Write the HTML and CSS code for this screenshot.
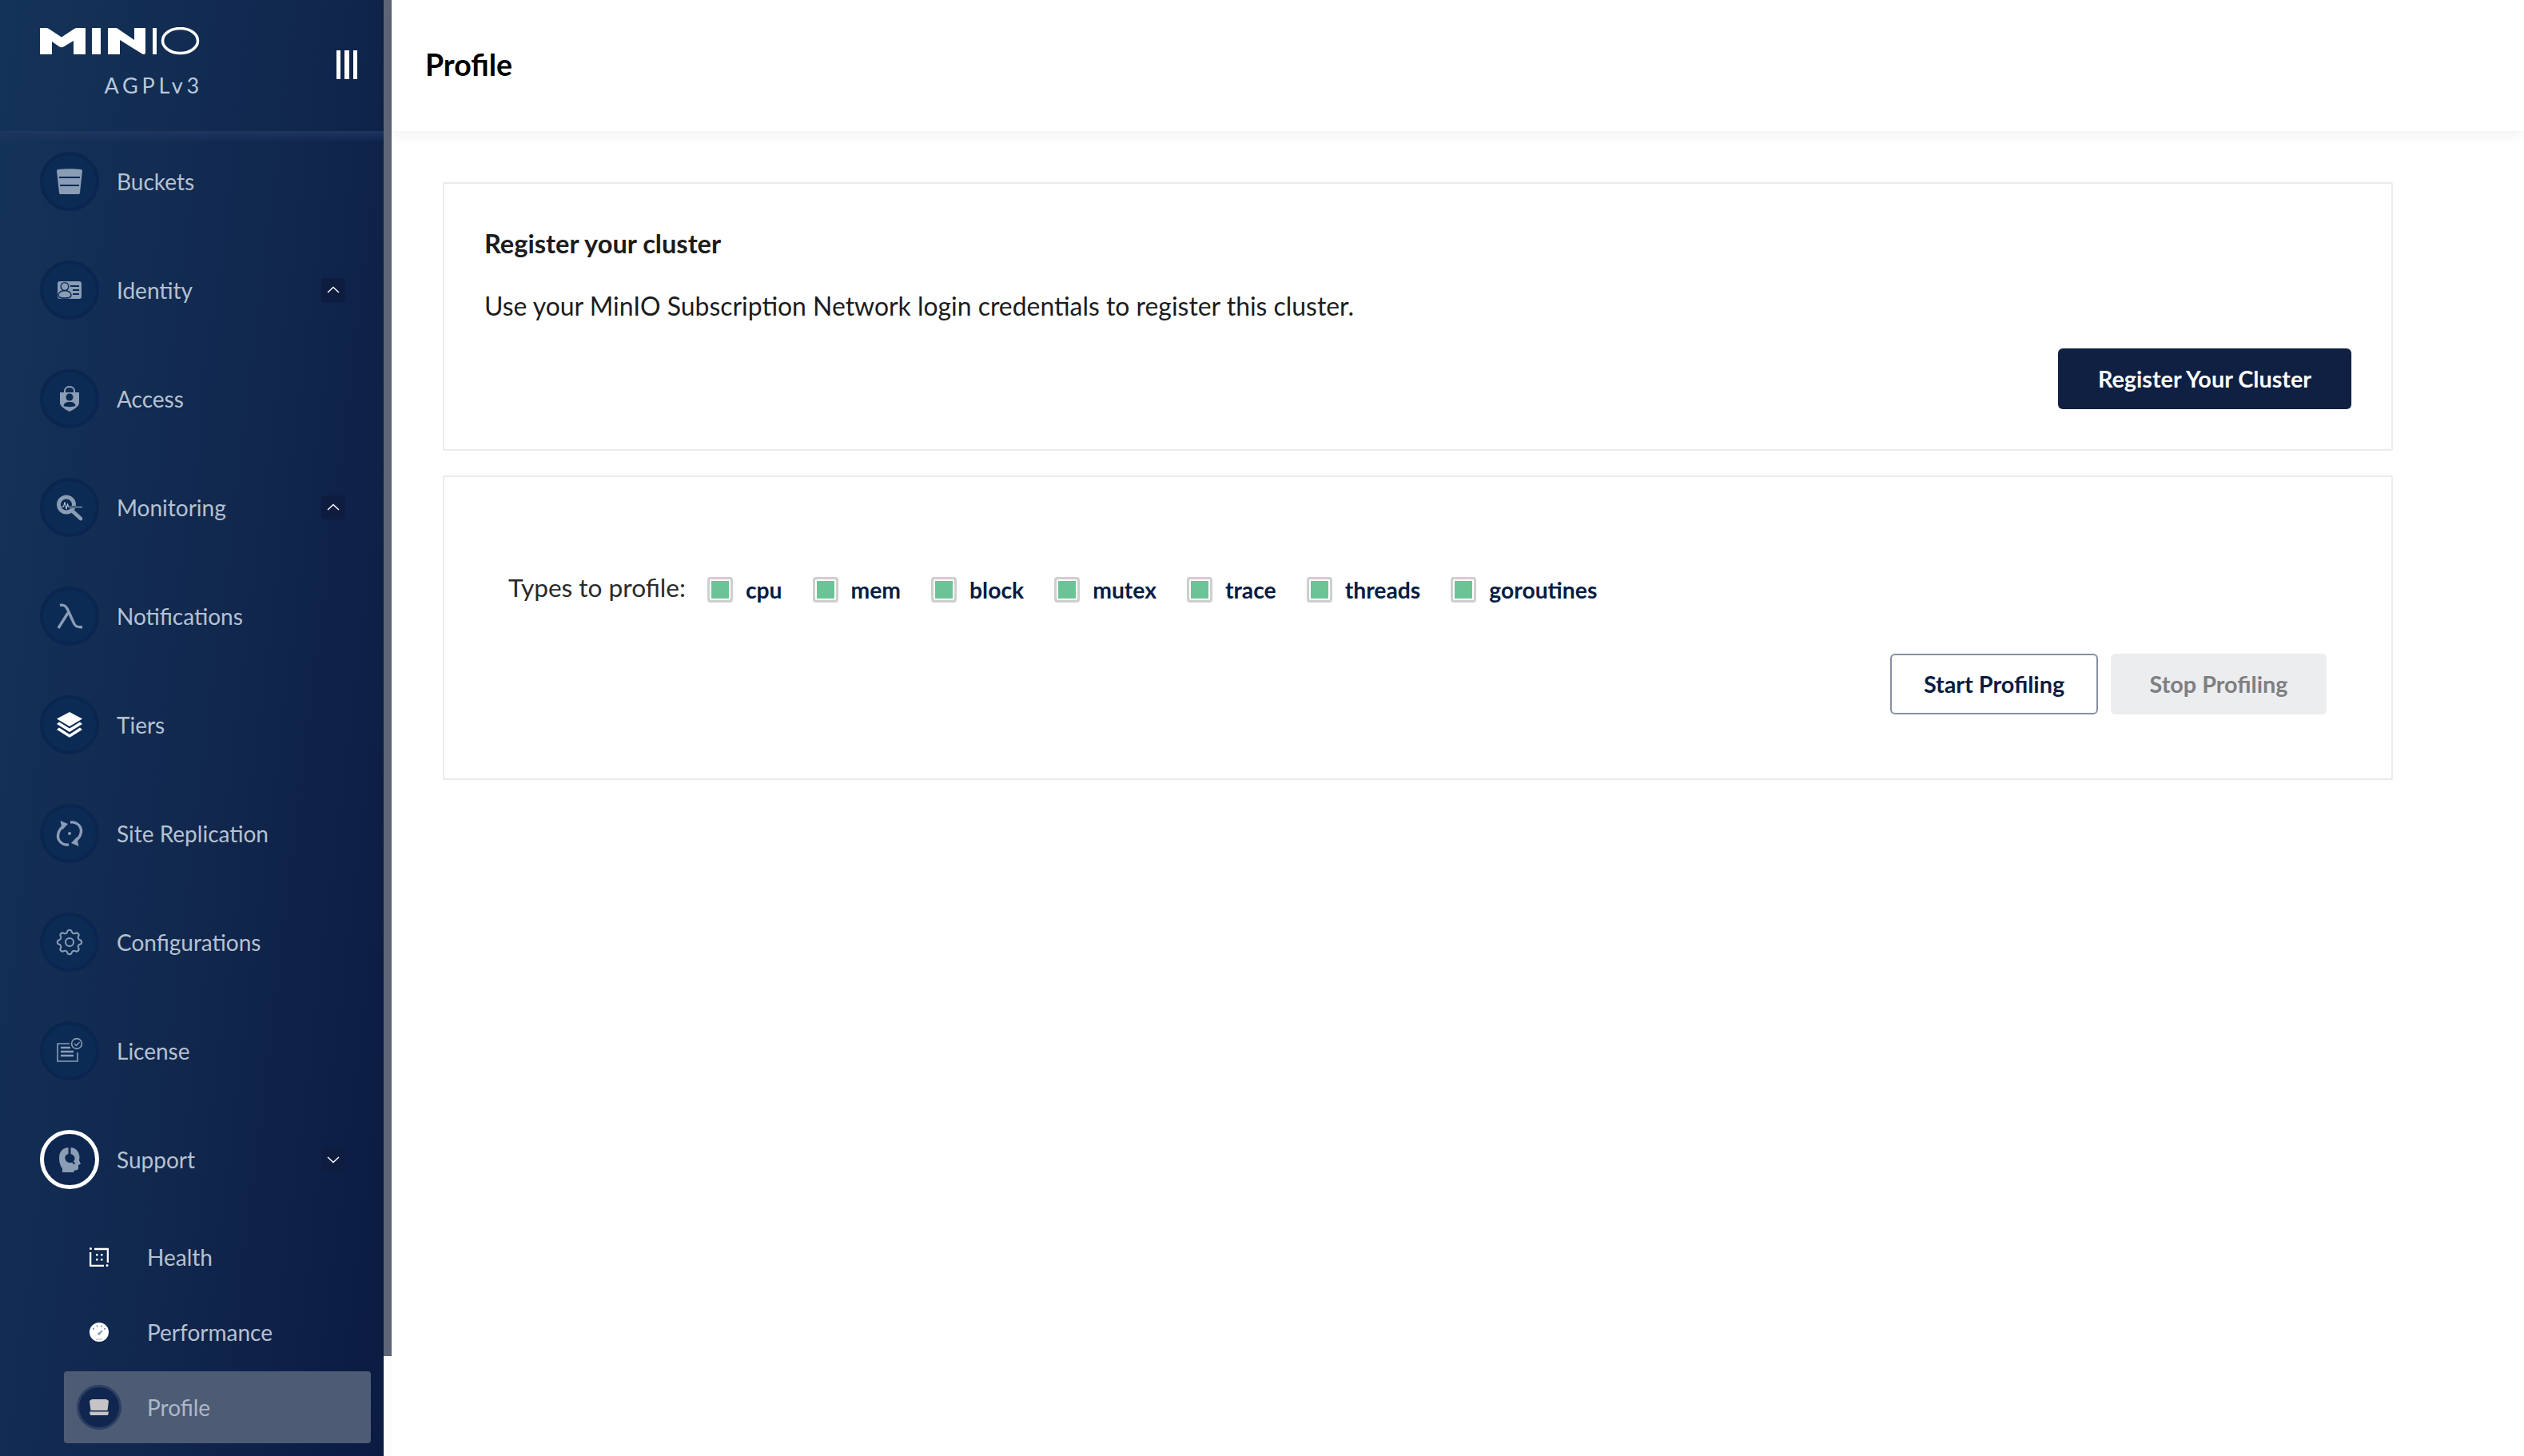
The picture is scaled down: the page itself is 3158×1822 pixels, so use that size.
FILE: index.html
```html
<!DOCTYPE html>
<html lang="en">
<head>
<meta charset="utf-8">
<title>MinIO Console - Profile</title>
<link rel="stylesheet" href="styles.css">
</head>
<body>
<div class="app">
  <aside class="sidebar">
    <div class="menu">
      <div class="brand">
        <div class="logo-block">
          <svg class="logo" viewBox="50 34 200 36" width="200" height="36" aria-label="MinIO">
            <path fill="#fff" d="M50 35H58C59 35 60 35.300 61 36L77 46.500L93 36C94 35.300 95 35 96 35H107V68H92V51L80 58.300C78 59.500 76 59.500 74 58.300L65 52V68H50Z"/>
            <path fill="#fff" d="M115 35H126V68H115Z"/>
            <path fill="#fff" d="M135 35H146L168 50V35H182V66C182 68 180 68.500 178 67.500L150 50V68H135Z"/>
            <path fill="#fff" d="M191 35H196V68H191Z"/>
            <ellipse cx="225.500" cy="51" rx="22" ry="15.500" fill="none" stroke="#fff" stroke-width="3.500"/>
          </svg>
          <div class="license">AGPLv3</div>
        </div>
        <div class="collapse"><span></span><span></span><span></span></div>
      </div>
      <nav class="nav">
        <div class="row">
          <span class="disc"><svg viewBox="0 0 32 32" class="ic"><path d="M2 1C10 0 22 0 30 1C31.500 1 32 2 32 3L29 30C29 31.500 28 32 27 32H5C4 32 3 31.500 3 30L0 3C0 2 .5 1 2 1Z"/><path class="cut" d="M3 11H29M4 21H28" stroke-width="2.200"/></svg></span>
          <span class="label">Buckets</span>
        </div>
        <div class="row">
          <span class="disc"><svg viewBox="0 0 32 32" class="ic"><rect x="1" y="5" width="30" height="22" rx="3"/><circle class="cut-fill" cx="10" cy="11.500" r="5.500"/><circle cx="10" cy="11.500" r="4.200"/><path class="cut" d="M17 11H28M20 16H28M20 21H28" stroke-width="2"/><path class="cut" d="M2 22C3 17 7 16.800 10 16.800C13 16.800 17 17 18 22C18 26 14 26 10 26C6 26 2 26 2 22Z" stroke-width="1.400"/></svg></span>
          <span class="label">Identity</span>
          <span class="chev"><svg viewBox="0 0 30 30"><path d="M8 18L15 11.500L22 18"/></svg></span>
        </div>
        <div class="row">
          <span class="disc"><svg viewBox="0 0 32 32" class="ic"><path d="M4 8H28V21C28 26 20 30 16 32C12 30 4 26 4 21Z"/><path d="M10 9V6C10 2.500 13 1 16 1C19 1 22 2.500 22 6V9" fill="none" stroke="currentColor" stroke-width="2"/><circle class="cut-fill" cx="16" cy="14" r="4.500"/><path class="cut-fill" d="M8.500 25C9 21 12 20 16 20C20 20 23 21 23.500 25C20 26.500 12 26.500 8.500 25Z"/></svg></span>
          <span class="label">Access</span>
        </div>
        <div class="row">
          <span class="disc"><svg viewBox="0 0 32 32" class="ic"><circle cx="12" cy="12.500" r="9.500" fill="none" stroke="currentColor" stroke-width="5"/><path d="M19 20L30 30" fill="none" stroke="currentColor" stroke-width="4.600" stroke-linecap="round"/><path class="cut" d="M15 15.500H32" stroke-width="3"/><path d="M6 15H8.500L10 9.500L12 18L13.500 12L15 15.500H32" fill="none" stroke="#b9c5d3" stroke-width="1.100"/></svg></span>
          <span class="label">Monitoring</span>
          <span class="chev"><svg viewBox="0 0 30 30"><path d="M8 18L15 11.500L22 18"/></svg></span>
        </div>
        <div class="row">
          <span class="disc"><svg viewBox="0 0 32 32" class="ic"><path d="M4 2.500C9 1 11.500 3 14 8.500L21 24C22.500 28 25 30.500 32 29.500M14 12L2 31" fill="none" stroke="currentColor" stroke-width="3.400"/></svg></span>
          <span class="label">Notifications</span>
        </div>
        <div class="row">
          <span class="disc"><svg viewBox="0 0 32 32" class="ic white"><path d="M16 0L32 8.500L16 18L0 8.500Z"/><path d="M3 12.500L16 20.500L29 12.500L32 15L16 25L0 15Z"/><path d="M3 19.500L16 28L29 19.500L32 22L16 32L0 22Z"/></svg></span>
          <span class="label">Tiers</span>
        </div>
        <div class="row">
          <span class="disc"><svg viewBox="0 0 32 32" class="ic"><path d="M9 6.500C2 11 -1 20 4 26C7 29.500 11 30.500 15 30M23 25.500C30 21 33 12 28 6C25 2.500 21 1.500 17 2" fill="none" stroke="currentColor" stroke-width="3.400"/><path d="M4.500 0L14 4L7 11.500Z"/><path d="M27.500 32L18 28L25 20.500Z"/><circle cx="16" cy="16" r="2"/></svg></span>
          <span class="label">Site Replication</span>
        </div>
        <div class="row">
          <span class="disc"><svg viewBox="2.500 2.500 19 19" class="ic"><path fill="none" stroke="currentColor" stroke-width="1.200" d="M10.325 4.317c.426-1.756 2.924-1.756 3.35 0a1.724 1.724 0 002.573 1.066c1.543-.94 3.31.826 2.37 2.37a1.724 1.724 0 001.065 2.572c1.756.426 1.756 2.924 0 3.35a1.724 1.724 0 00-1.066 2.573c.94 1.543-.826 3.31-2.37 2.37a1.724 1.724 0 00-2.572 1.065c-.426 1.756-2.924 1.756-3.35 0a1.724 1.724 0 00-2.573-1.066c-1.543.94-3.31-.826-2.37-2.37a1.724 1.724 0 00-1.065-2.572c-1.756-.426-1.756-2.924 0-3.35a1.724 1.724 0 001.066-2.573c-.94-1.543.826-3.31 2.37-2.37.996.608 2.296.07 2.572-1.065z"/><circle cx="12" cy="12" r="3" fill="none" stroke="currentColor" stroke-width="1.200"/></svg></span>
          <span class="label">Configurations</span>
        </div>
        <div class="row">
          <span class="disc"><svg viewBox="0 0 32 32" class="ic"><path d="M16 7H1V29H26V18" fill="none" stroke="currentColor" stroke-width="1.600"/><path d="M5 12H17M5 17H21M5 22H21" fill="none" stroke="currentColor" stroke-width="2.400"/><circle cx="25" cy="7" r="6.400" fill="#0b2a54" stroke="currentColor" stroke-width="1.600"/><path d="M22 7L24.500 9.500L28.500 5" fill="none" stroke="currentColor" stroke-width="1.400"/></svg></span>
          <span class="label">License</span>
        </div>
        <div class="row">
          <span class="disc disc-open"><svg viewBox="0 0 32 32" class="ic"><path d="M3 14C3 6 8 1 14.500 1V9C11 10 10 13 10.500 15C11 18 14 20 17 20C20 20 22 18 22.500 15C23 13 21 10 17.500 9V1C24 1 28 6 28.500 13C28.500 15 28 16 28 17L30 21.500L27 23L27 27C27 29 25 29.500 22 29.500L21 32H7L7 27C4 24 3 18 3 14Z"/><circle cx="16" cy="14.500" r="3.600" fill="none" stroke="#0d2a52" stroke-width="1.800"/><path class="cut" d="M18.500 17.500L22.500 21.500" stroke-width="2"/></svg></span>
          <span class="label">Support</span>
          <span class="chev"><svg viewBox="0 0 30 30"><path d="M8 12L15 18.500L22 12"/></svg></span>
        </div>
        <div class="subnav">
          <div class="subrow">
            <span class="subicon"><svg viewBox="0 0 24 24" class="ic-sm"><path d="M6 2H23V19M18 23H1V6" fill="none" stroke="#fff" stroke-width="2.600"/><circle cx="1.500" cy="1.500" r="1.500" fill="#fff"/><circle cx="22" cy="22.500" r="1.500" fill="#fff"/><path d="M8 8h2.500v2.500H8zM14 8h2.500v2.500H14zM8 14h2.500v2.500H8zM14 14h2.500v2.500H14z" fill="#fff"/></svg></span>
            <span class="label">Health</span>
          </div>
          <div class="subrow">
            <span class="subicon"><svg viewBox="0 0 24 24" class="ic-sm"><circle cx="12" cy="12" r="12" fill="#fff"/><path d="M12 14L16 10" stroke="#8a9db4" stroke-width="2"/><circle cx="12" cy="14" r="1.800" fill="#8a9db4"/><path d="M8 21H16" stroke="#8a9db4" stroke-width=".8"/><path d="M4 7L6 8.500M9 3.500L10 5.500M15.500 3.500L14.500 5.500M20 7L18 8.500" stroke="#33496b" stroke-width="1"/></svg></span>
            <span class="label">Performance</span>
          </div>
          <div class="subrow subrow-active">
            <span class="subicon subicon-active"><svg viewBox="0 0 24 20" class="ic-prof"><path d="M3 0H21L24 2L22.500 14H1.500L0 2Z" fill="#c5c3c6"/><path d="M0 15.500H24L23 20H1Z" fill="#c5c3c6"/></svg></span>
            <span class="label label-active">Profile</span>
          </div>
        </div>
      </nav>
    </div>
    <div class="thumb"></div>
  </aside>
  <main class="main">
    <header class="page-head"><h1 class="page-title">Profile</h1></header>
    <div class="content">
      <section class="card card-register">
        <h2 class="card-title">Register your cluster</h2>
        <p class="card-text">Use your MinIO Subscription Network login credentials to register this cluster.</p>
        <div class="actions"><button class="btn btn-primary">Register Your Cluster</button></div>
      </section>
      <section class="card card-profile">
        <div class="types">
          <span class="types-label">Types to profile:</span>
          <label class="check"><span class="box"></span>cpu</label>
          <label class="check"><span class="box"></span>mem</label>
          <label class="check"><span class="box"></span>block</label>
          <label class="check"><span class="box"></span>mutex</label>
          <label class="check"><span class="box"></span>trace</label>
          <label class="check"><span class="box"></span>threads</label>
          <label class="check"><span class="box"></span>goroutines</label>
        </div>
        <div class="actions actions-profile">
          <button class="btn btn-outline">Start Profiling</button>
          <button class="btn btn-disabled">Stop Profiling</button>
        </div>
      </section>
    </div>
  </main>
</div>
</body>
</html>
```
FILE: styles.css
```css
* { box-sizing: border-box; }
html, body { margin: 0; padding: 0; height: 100%; overflow: hidden; background: #fff; }
body { font-family: Lato, "Open Sans", sans-serif; color: #000; }

.app { display: flex; height: 1822px; }

/* sidebar */
.sidebar { position: relative; flex: 0 0 490px; width: 490px; height: 100%; background: #fbfbfb; overflow: hidden; }
.menu { width: 480px; height: 100%; background: linear-gradient(97deg, #143358 0%, #11274e 55%, #0b1b42 100%); }
.thumb { position: absolute; top: 0; right: 0; width: 10px; height: 1697px; background: #5f6678; }

.brand { display: flex; justify-content: space-between; align-items: flex-start; height: 164px; padding: 34px 33px 0 50px; }
.logo-block { display: flex; flex-direction: column; align-items: flex-end; width: 200px; }
.logo { display: block; }
.license { margin-top: 20px; font-size: 27px; line-height: 34px; letter-spacing: 4.800px; margin-right: -4px; color: #b9c8dc; font-weight: 400; }
.collapse { display: flex; gap: 5px; margin-top: 29px; height: 36px; }
.collapse span { width: 5.500px; height: 36px; background: #fff; }

.nav { display: flex; flex-direction: column; gap: 62px; padding-top: 26px; background: linear-gradient(#1f3661, rgba(31, 54, 97, 0)) top / 100% 14px no-repeat; }
.row { display: flex; align-items: center; height: 74px; padding: 0 48px 0 50px; }
.disc { flex: 0 0 74px; width: 74px; height: 74px; border-radius: 50%; background: #0b2a54; border: 4px solid #0a2550; display: flex; align-items: center; justify-content: center; color: #8a9db4; }
.disc-open { background: #0e2750; border: 5px solid #fff; }
.ic { width: 32px; height: 32px; fill: currentColor; display: block; overflow: visible; }
.ic.white { color: #fff; }
.cut { fill: none; stroke: #0b2a54; }
.cut-fill { fill: #0b2a54; }
.label { margin-left: 22px; font-size: 28px; line-height: 36px; color: #b6c2d1; flex: 1; }
.chev { flex: 0 0 30px; width: 30px; height: 30px; border-radius: 4px; background: #0e1c40; }
.chev svg { display: block; width: 30px; height: 30px; fill: none; stroke: #fff; stroke-width: 1.500; }

.subnav { display: flex; flex-direction: column; gap: 4px; margin-top: -22px; margin-left: 80px; width: 384px; }
.subrow { display: flex; align-items: center; height: 90px; padding-left: 16px; border-radius: 4px; }
.subrow-active { background: #4d5b75; }
.subicon { flex: 0 0 56px; width: 56px; height: 56px; display: flex; align-items: center; justify-content: center; border-radius: 50%; }
.subicon-active { background: #11264f; border: 3px solid #2c3f62; }
.subrow .label { margin-left: 32px; }
.label-active { color: #aeb8c6; }
.ic-sm { width: 24px; height: 24px; display: block; }
.ic-prof { width: 24px; height: 20px; display: block; }

/* main */
.main { flex: 1; min-width: 0; display: flex; flex-direction: column; }
.page-head { height: 164px; flex: 0 0 164px; display: flex; align-items: center; padding: 0 0 2px 42px; background: #fff; box-shadow: 0 4px 18px rgba(0, 0, 0, .06); position: relative; }
.page-title { margin: 0; font-size: 37.400px; line-height: 44px; font-weight: 700; color: #000; }
.content { padding: 64px 0 0 64px; width: 2504px; display: flex; flex-direction: column; gap: 31px; }

.card { width: 2440px; border: 2px solid #eaebec; border-radius: 2px; background: #fff; }
.card-register { padding: 50px; height: 336px; }
.card-title { margin: 0; font-size: 32.600px; line-height: 50px; font-weight: 700; color: #1c1c1c; }
.card-text { margin: 28px 0 0; font-size: 31.900px; line-height: 50px; color: #1c1c1c; }
.actions { display: flex; justify-content: flex-end; margin-top: 28px; gap: 16px; }

.card-profile { padding: 121px 81px 80px 80px; height: 381px; }
.types { display: flex; align-items: center; height: 40px; }
.types-label { font-size: 31.600px; line-height: 40px; color: #2a2a2a; margin-right: 27px; position: relative; top: -3px; }
.check { display: flex; align-items: center; font-size: 28.300px; font-weight: 700; line-height: 40px; color: #081c42; margin-right: 38px; }
.box { width: 32px; height: 32px; margin-right: 16px; border: 3px solid #cfcfcf; border-radius: 4px; background: #6cc496; box-shadow: inset 0 0 0 2px #fff; }
.actions-profile { margin-top: 60px; }

.btn { height: 76px; font-family: inherit; font-size: 28.800px; font-weight: 700; border-radius: 6px; padding: 0; }
.btn-primary { width: 367px; background: #0f2042; color: #fff; border: 0; }
.btn-outline { width: 260px; background: #fff; color: #081c42; border: 2px solid #868fa5; }
.btn-disabled { width: 270px; background: #ecedef; color: #7d7f82; border: 0; }
```
